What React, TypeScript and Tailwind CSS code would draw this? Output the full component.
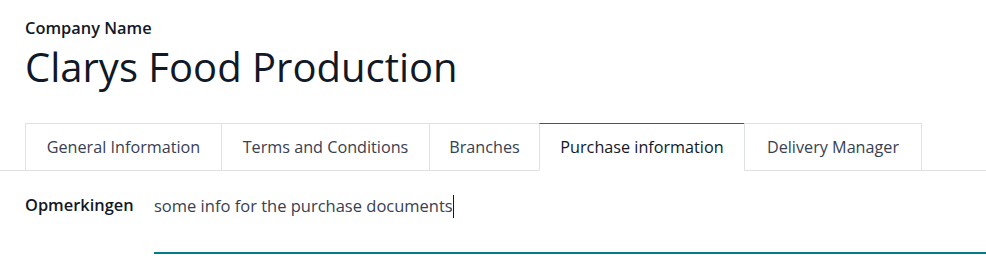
import React from "react";

const tabs = [
  { label: "General Information", w: "w-[197px]" },
  { label: "Terms and Conditions", w: "w-[209px]" },
  { label: "Branches", w: "w-[111px]" },
  { label: "Purchase information", w: "w-[206px]" },
  { label: "Delivery Manager", w: "w-[178px]" },
];

export default function App() {
  const active = 3;
  return (
    <div
      className="w-[986px] h-[276px] bg-white overflow-hidden text-[#212529]"
      style={{ fontFamily: '"Open Sans", "Noto Sans", sans-serif' }}
    >
      <div className="pl-[25px] pt-[17px]">
        <div className="text-[16.4px] font-semibold leading-[22px] text-[#111827]">Company Name</div>
        <div className="text-[40px] leading-[52px] text-[#111827] mt-[2px]">Clarys Food Production</div>
      </div>
      <div className="mt-[30px] flex border-b border-[#dee2e6] pl-[25px]">
        {tabs.map((t, i) => (
          <div
            key={t.label}
            className={
              "-mb-px h-[48px] flex items-center justify-center text-[16.2px] border whitespace-nowrap " +
              t.w +
              " " +
              (i === active
                ? "border-[#dee2e6] border-t-[#5c4a5e] border-b-white bg-white text-[#111827]"
                : "border-[#dee2e6] text-[#374151]") +
              (i > 0 ? " -ml-px" : "")
            }
          >
            {t.label}
          </div>
        ))}
      </div>
      <div className="flex pl-[25px] pt-[19px]">
        <div className="w-[129px] text-[16.4px] font-semibold leading-[24px] text-[#111827] pt-[3px]">Opmerkingen</div>
        <div className="flex-1 h-[64px] border-b-2 border-[#017e84] relative">
          <div className="text-[16.5px] leading-[24px] pt-[4px] text-[#374151] flex items-center">
            <span>some info for the purchase documents</span>
            <span className="inline-block w-px h-[23px] bg-[#111827]" />
          </div>
        </div>
      </div>
    </div>
  );
}
